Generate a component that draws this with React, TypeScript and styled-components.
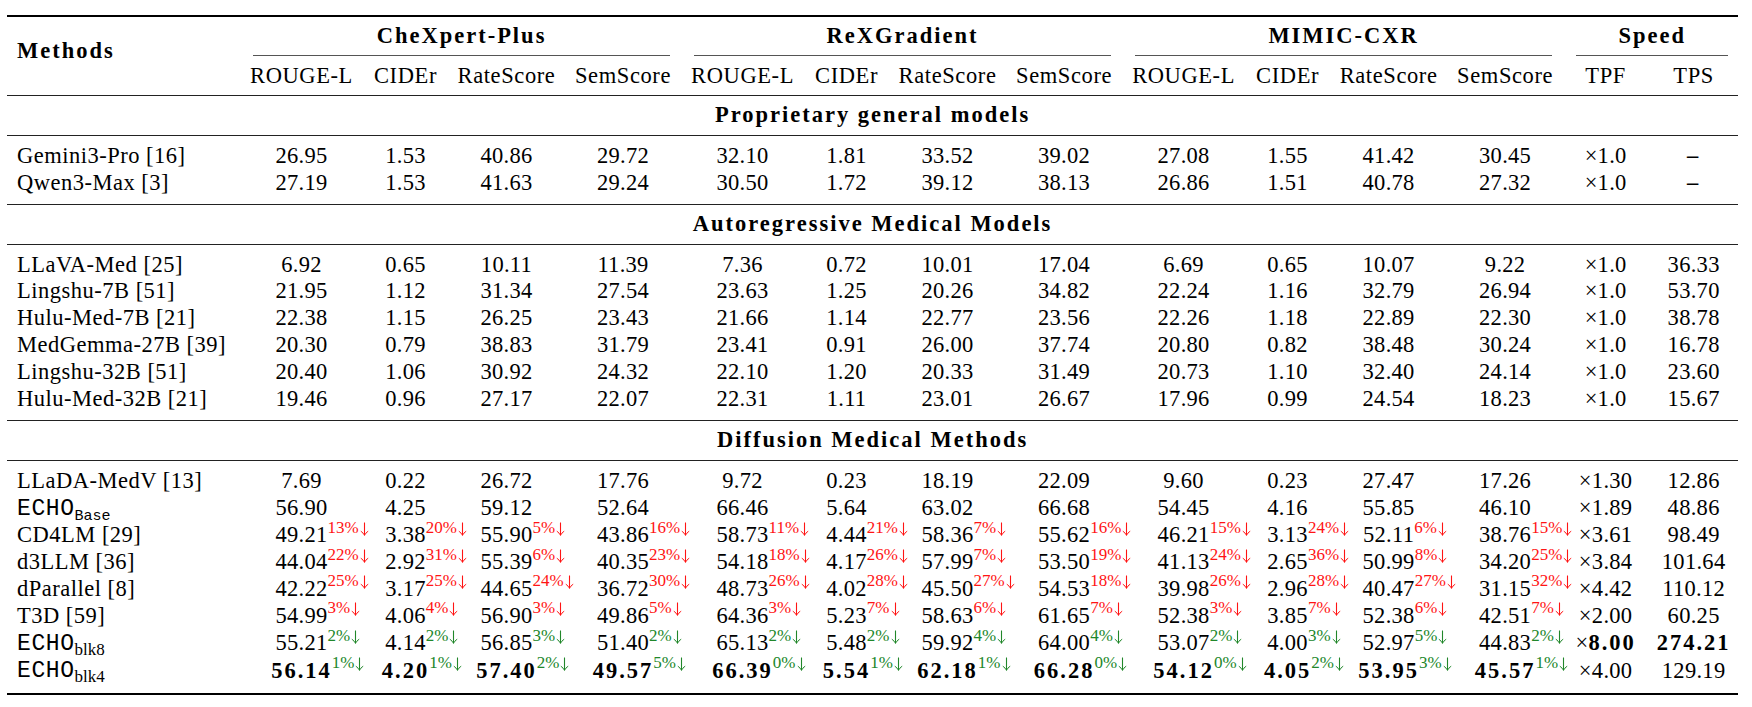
import React from 'react';
import styled, { createGlobalStyle } from 'styled-components';

type Tone = 'red' | 'green';

interface ResultRow {
    name: React.ReactNode;
    scores: string[];
    tpf: React.ReactNode;
    tps: React.ReactNode;
    tone?: Tone;
    bold?: boolean;
}

interface Section {
    title: string;
    rows: ResultRow[];
}

const serif = "'Liberation Serif', 'Times New Roman', serif";

const GlobalStyle = createGlobalStyle`
    html, body {
        margin: 0;
        padding: 0;
        background: #fff;
    }
    body, table, th, td {
        font-family: ${serif};
        color: #000;
    }
`;

const colWidths = [232, 125, 83, 119, 114, 125, 83, 119, 114, 125, 83, 119, 114, 87, 89];
const metrics = ['ROUGE-L', 'CIDEr', 'RateScore', 'SemScore'];
const datasets = ['CheXpert-Plus', 'ReXGradient', 'MIMIC-CXR'];

const Table = styled.table`
    border-collapse: collapse;
    table-layout: fixed;
    width: 1731px;
    margin: 15px 0 0 7px;
    border-top: 2px solid #000;
    border-bottom: 2px solid #000;
    font-family: ${serif};
    font-size: 22.5px;
    letter-spacing: 0.3px;
`;

const Col = styled.col<{ $w: number }>`
    width: ${p => p.$w}px;
`;

const Head = styled.thead`
    border-bottom: 1px solid #222;
`;

const MethodsHead = styled.th`
    text-align: left;
    vertical-align: middle;
    padding: 0 0 12px 10px;
    font-weight: 700;
    letter-spacing: 2px;
    line-height: 27px;
`;

const GroupHead = styled.th`
    padding: 5px 0 0;
    font-weight: 700;
    letter-spacing: 2px;
    text-align: center;
`;

const GroupLabel = styled.div`
    margin: 0 10px 0 14px;
    padding-bottom: 6px;
    line-height: 27px;
    border-bottom: 1px solid #555;
`;

const SubHead = styled.th`
    padding: 6px 0;
    font-weight: 400;
    line-height: 27px;
    text-align: center;
    white-space: nowrap;
    letter-spacing: 0.6px;
`;

const SectionTitle = styled.td`
    text-align: center;
    font-weight: 700;
    letter-spacing: 2px;
    padding: 6px 0;
    line-height: 26.8px;
    border-bottom: 1px solid #222;
`;

const DataBody = styled.tbody`
    border-bottom: 1px solid #222;

    tr:first-child td {
        padding-top: 7px;
    }
    tr:last-child td {
        padding-bottom: 7.5px;
    }
`;

const NameCell = styled.td`
    text-align: left;
    padding: 0 0 0 10px;
    line-height: 26.8px;
    white-space: nowrap;
    letter-spacing: 0.5px;
`;

const NumCell = styled.td`
    text-align: center;
    padding: 0;
    line-height: 26.8px;
    white-space: nowrap;
`;

const Value = styled.span<{ $bold?: boolean }>`
    position: relative;
    font-weight: ${p => (p.$bold ? 700 : 400)};
    letter-spacing: ${p => (p.$bold ? '2px' : '0.3px')};
`;

const Drop = styled.span<{ $tone: Tone }>`
    position: absolute;
    left: 100%;
    bottom: 11.5px;
    font-family: ${serif};
    font-size: 17px;
    line-height: 1;
    font-weight: 400;
    letter-spacing: 0;
    white-space: nowrap;
    color: ${p => (p.$tone === 'red' ? '#ff1414' : '#21872a')};
`;

const ArrowIcon = styled.svg`
    display: inline-block;
    width: 9px;
    height: 14px;
    margin-left: 1px;
    vertical-align: -3px;
`;

const DownArrow = () => (
    <ArrowIcon viewBox="0 0 9 14" aria-hidden="true">
        <path d="M4.5 0.5V13.2" stroke="currentColor" strokeWidth="1.1" fill="none" />
        <path d="M0.8 9.2C2.4 10.3 3.8 11.8 4.5 13.4C5.2 11.8 6.6 10.3 8.2 9.2" stroke="currentColor" strokeWidth="1" fill="none" />
    </ArrowIcon>
);

const Strong = styled.b`
    font-weight: 700;
    letter-spacing: 2px;
`;

const Tt = styled.span`
    font-family: 'Liberation Mono', 'DejaVu Sans Mono', monospace;
    font-size: 23px;
    letter-spacing: 0.6px;
`;

const Sub = styled.sub<{ $mono?: boolean }>`
    font-family: ${p => (p.$mono ? "'Liberation Mono', monospace" : serif)};
    font-size: ${p => (p.$mono ? '15px' : '17px')};
    vertical-align: -5px;
    line-height: 0;
    letter-spacing: 0;
`;

const Echo = ({ sub, mono }: { sub: string; mono?: boolean }) => (
    <>
        <Tt>ECHO</Tt>
        <Sub $mono={mono}>{sub}</Sub>
    </>
);

const sections: Section[] = [
    {
        title: 'Proprietary general models',
        rows: [
            { name: 'Gemini3-Pro [16]', scores: ['26.95', '1.53', '40.86', '29.72', '32.10', '1.81', '33.52', '39.02', '27.08', '1.55', '41.42', '30.45'], tpf: '×1.0', tps: <Strong>–</Strong> },
            { name: 'Qwen3-Max [3]', scores: ['27.19', '1.53', '41.63', '29.24', '30.50', '1.72', '39.12', '38.13', '26.86', '1.51', '40.78', '27.32'], tpf: '×1.0', tps: <Strong>–</Strong> },
        ],
    },
    {
        title: 'Autoregressive Medical Models',
        rows: [
            { name: 'LLaVA-Med [25]', scores: ['6.92', '0.65', '10.11', '11.39', '7.36', '0.72', '10.01', '17.04', '6.69', '0.65', '10.07', '9.22'], tpf: '×1.0', tps: '36.33' },
            { name: 'Lingshu-7B [51]', scores: ['21.95', '1.12', '31.34', '27.54', '23.63', '1.25', '20.26', '34.82', '22.24', '1.16', '32.79', '26.94'], tpf: '×1.0', tps: '53.70' },
            { name: 'Hulu-Med-7B [21]', scores: ['22.38', '1.15', '26.25', '23.43', '21.66', '1.14', '22.77', '23.56', '22.26', '1.18', '22.89', '22.30'], tpf: '×1.0', tps: '38.78' },
            { name: 'MedGemma-27B [39]', scores: ['20.30', '0.79', '38.83', '31.79', '23.41', '0.91', '26.00', '37.74', '20.80', '0.82', '38.48', '30.24'], tpf: '×1.0', tps: '16.78' },
            { name: 'Lingshu-32B [51]', scores: ['20.40', '1.06', '30.92', '24.32', '22.10', '1.20', '20.33', '31.49', '20.73', '1.10', '32.40', '24.14'], tpf: '×1.0', tps: '23.60' },
            { name: 'Hulu-Med-32B [21]', scores: ['19.46', '0.96', '27.17', '22.07', '22.31', '1.11', '23.01', '26.67', '17.96', '0.99', '24.54', '18.23'], tpf: '×1.0', tps: '15.67' },
        ],
    },
    {
        title: 'Diffusion Medical Methods',
        rows: [
            { name: 'LLaDA-MedV [13]', scores: ['7.69', '0.22', '26.72', '17.76', '9.72', '0.23', '18.19', '22.09', '9.60', '0.23', '27.47', '17.26'], tpf: '×1.30', tps: '12.86' },
            { name: <Echo sub="Base" mono />, scores: ['56.90', '4.25', '59.12', '52.64', '66.46', '5.64', '63.02', '66.68', '54.45', '4.16', '55.85', '46.10'], tpf: '×1.89', tps: '48.86' },
            { name: 'CD4LM [29]', tone: 'red', scores: ['49.21:13', '3.38:20', '55.90:5', '43.86:16', '58.73:11', '4.44:21', '58.36:7', '55.62:16', '46.21:15', '3.13:24', '52.11:6', '38.76:15'], tpf: '×3.61', tps: '98.49' },
            { name: 'd3LLM [36]', tone: 'red', scores: ['44.04:22', '2.92:31', '55.39:6', '40.35:23', '54.18:18', '4.17:26', '57.99:7', '53.50:19', '41.13:24', '2.65:36', '50.99:8', '34.20:25'], tpf: '×3.84', tps: '101.64' },
            { name: 'dParallel [8]', tone: 'red', scores: ['42.22:25', '3.17:25', '44.65:24', '36.72:30', '48.73:26', '4.02:28', '45.50:27', '54.53:18', '39.98:26', '2.96:28', '40.47:27', '31.15:32'], tpf: '×4.42', tps: '110.12' },
            { name: 'T3D [59]', tone: 'red', scores: ['54.99:3', '4.06:4', '56.90:3', '49.86:5', '64.36:3', '5.23:7', '58.63:6', '61.65:7', '52.38:3', '3.85:7', '52.38:6', '42.51:7'], tpf: '×2.00', tps: '60.25' },
            { name: <Echo sub="blk8" />, tone: 'green', scores: ['55.21:2', '4.14:2', '56.85:3', '51.40:2', '65.13:2', '5.48:2', '59.92:4', '64.00:4', '53.07:2', '4.00:3', '52.97:5', '44.83:2'], tpf: <>×<Strong>8.00</Strong></>, tps: <Strong>274.21</Strong> },
            { name: <Echo sub="blk4" />, tone: 'green', bold: true, scores: ['56.14:1', '4.20:1', '57.40:2', '49.57:5', '66.39:0', '5.54:1', '62.18:1', '66.28:0', '54.12:0', '4.05:2', '53.95:3', '45.57:1'], tpf: '×4.00', tps: '129.19' },
        ],
    },
];

function Score({ raw, tone, bold }: { raw: string; tone?: Tone; bold?: boolean }) {
    const [value, drop] = raw.split(':');
    return (
        <Value $bold={bold}>
            {value}
            {drop !== undefined && tone && (
                <Drop $tone={tone}>{drop}%<DownArrow /></Drop>
            )}
        </Value>
    );
}

function App() {
    return (
        <>
            <GlobalStyle />
            <Table>
                <colgroup>
                    {colWidths.map((w, i) => <Col key={i} $w={w} />)}
                </colgroup>
                <Head>
                    <tr>
                        <MethodsHead rowSpan={2}>Methods</MethodsHead>
                        {datasets.map(d => (
                            <GroupHead key={d} colSpan={4}><GroupLabel>{d}</GroupLabel></GroupHead>
                        ))}
                        <GroupHead colSpan={2}><GroupLabel>Speed</GroupLabel></GroupHead>
                    </tr>
                    <tr>
                        {datasets.map(d => metrics.map(m => <SubHead key={d + m}>{m}</SubHead>))}
                        <SubHead>TPF</SubHead>
                        <SubHead>TPS</SubHead>
                    </tr>
                </Head>
                {sections.map(section => (
                    <React.Fragment key={section.title}>
                        <tbody>
                            <tr>
                                <SectionTitle colSpan={15}>{section.title}</SectionTitle>
                            </tr>
                        </tbody>
                        <DataBody>
                            {section.rows.map((row, r) => (
                                <tr key={r}>
                                    <NameCell>{row.name}</NameCell>
                                    {row.scores.map((s, i) => (
                                        <NumCell key={i}><Score raw={s} tone={row.tone} bold={row.bold} /></NumCell>
                                    ))}
                                    <NumCell>{row.tpf}</NumCell>
                                    <NumCell>{row.tps}</NumCell>
                                </tr>
                            ))}
                        </DataBody>
                    </React.Fragment>
                ))}
            </Table>
        </>
    );
}

export default App;
